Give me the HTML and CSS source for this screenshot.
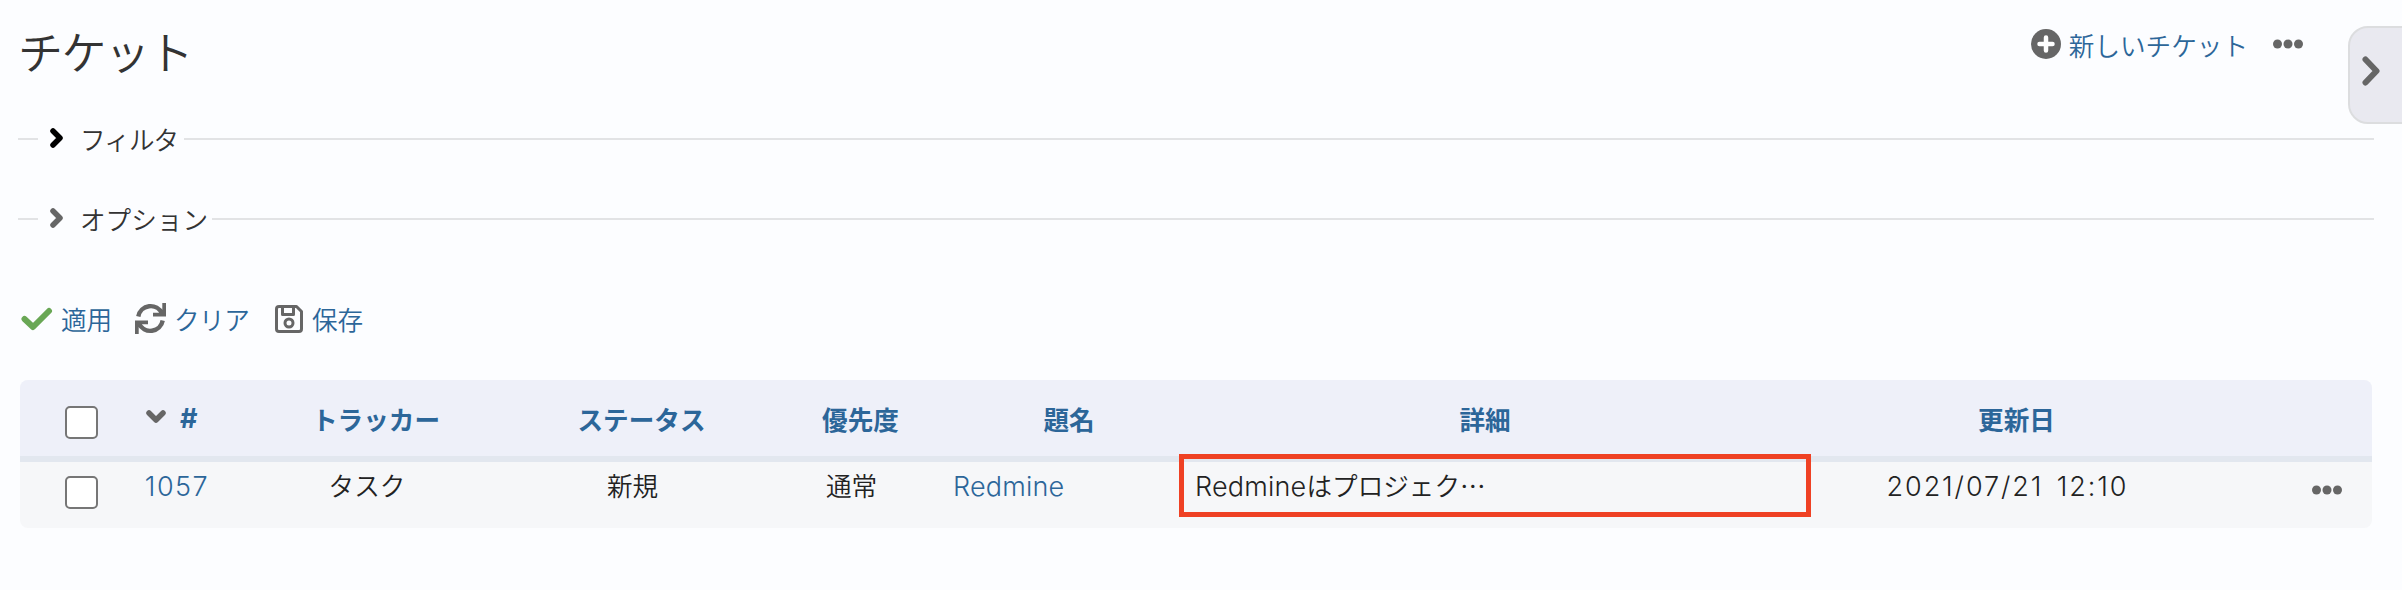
FILE: index.html
```html
<!DOCTYPE html>
<html lang="ja">
<head>
<meta charset="utf-8">
<title>チケット</title>
<link rel="stylesheet" href="styles.css">
</head>
<body>
<main class="content">
  <header class="top">
    <h1 class="title">チケット</h1>
    <div class="contextual">
      <svg class="icon-plus" viewBox="0 0 30 30"><circle cx="15" cy="15" r="15"/><path d="M15 8.500v13M8.500 15h13"/></svg>
      <a class="new-issue">新しいチケット</a>
      <svg class="icon-dots" viewBox="0 0 30 10"><circle cx="4.500" cy="5" r="4.500"/><circle cx="15" cy="5" r="4.500"/><circle cx="25.500" cy="5" r="4.500"/></svg>
    </div>
  </header>
  <div class="fieldset">
    <svg class="chev dark" viewBox="0 0 13 20"><path d="M3 3l7 7-7 7"/></svg>
    <span class="legend legend-filter">フィルタ</span>
  </div>
  <div class="fieldset">
    <svg class="chev" viewBox="0 0 13 20"><path d="M3 3l7 7-7 7"/></svg>
    <span class="legend legend-option">オプション</span>
  </div>
  <div class="buttons">
    <svg class="icon-check" viewBox="0 0 32 24"><path d="M3.500 12l8.500 8L28 4"/></svg>
    <a class="apply">適用</a>
    <svg class="icon-reload" viewBox="0 0 31 31"><path class="arc" d="M3.300 13.500A12.500 12.500 0 0 1 27 10.500M27.700 17.500A12.500 12.500 0 0 1 4 20.500"/><path class="head" d="M27.300 0H31V13.500H18V9.800h6.500l2.800-3zM3.700 31H0V17.500h13v3.700H6.500l-2.800 3z"/></svg>
    <a class="clear">クリア</a>
    <svg class="icon-save" viewBox="0 0 28 28"><path d="M4 1.500h17.500l5 5V24q0 2.500-2.500 2.500H4Q1.500 26.500 1.500 24V4Q1.500 1.500 4 1.500zM7.500 2v7.500h11V2"/><circle cx="14" cy="18" r="4"/></svg>
    <a class="save">保存</a>
  </div>
  <div class="issues">
    <div class="row head">
      <div class="cell check"><span class="checkbox"></span></div>
      <div class="cell id"><svg class="sort" viewBox="0 0 20 13"><path d="M3 3l7 7 7-7"/></svg><a class="hash">#</a></div>
      <div class="cell mid">トラッカー</div>
      <div class="cell mid">ステータス</div>
      <div class="cell mid">優先度</div>
      <div class="cell subject">題名</div>
      <div class="cell detail">詳細</div>
      <div class="cell mid">更新日</div>
      <div class="cell"></div>
    </div>
    <div class="row body">
      <div class="cell check"><span class="checkbox"></span></div>
      <div class="cell"><a class="number">1057</a></div>
      <div class="cell">タスク</div>
      <div class="cell">新規</div>
      <div class="cell">通常</div>
      <div class="cell subject"><a class="latin">Redmine</a></div>
      <div class="cell detail"><span class="latin">Redmine</span><span class="excerpt">はプロジェク…</span></div>
      <div class="cell"><span class="date">2021/07/21 12:10</span></div>
      <div class="cell more"><svg class="icon-dots" viewBox="0 0 30 10"><circle cx="4.500" cy="5" r="4.500"/><circle cx="15" cy="5" r="4.500"/><circle cx="25.500" cy="5" r="4.500"/></svg></div>
    </div>
    <div class="highlight"></div>
  </div>
</main>
<aside class="side-toggle"><svg viewBox="0 0 18 30"><path d="M3.500 3.500L14.500 15 3.500 26.500"/></svg></aside>
</body>
</html>
```
FILE: styles.css
```css
* { box-sizing: border-box; }
body {
  margin: 0;
  width: 2402px;
  height: 590px;
  overflow: hidden;
  background: #fcfdff;
  color: #222;
  font: 350 25.6px/36px "Noto Sans CJK JP", sans-serif;
}
svg { display: block; flex: none; fill: none; stroke-linecap: round; stroke-linejoin: round; }
a { color: #2c6699; white-space: nowrap; }
.content { padding: 0 30px 0 18px; }
.top { display: flex; justify-content: space-between; height: 119px; padding: 18px 69px 0 0; }
.title { margin: 0; font-size: 45px; line-height: 66px; font-weight: 350; color: #333; letter-spacing: -1.500px; }
.contextual { display: flex; height: 52px; align-items: center; }
.icon-plus { width: 30px; height: 30px; margin-right: 8px; fill: #666; }
.icon-plus path { stroke: #fff; stroke-width: 4.500px; }
.new-issue { margin: 1px 25px 0 0; }
.icon-dots { width: 30px; height: 10px; fill: #666; }
.fieldset { display: flex; align-items: center; height: 40px; margin-bottom: 40px; }
.fieldset::before, .fieldset::after { content: ""; height: 2px; background: #e2e3e5; }
.fieldset::before { width: 20px; }
.fieldset::after { flex: 1; margin-right: -2px; }
.chev { width: 13px; height: 20px; margin: 0 17px 2px 12px; stroke: #666; stroke-width: 5.500px; }
.chev.dark { stroke: #000; }
.legend { color: #333; white-space: nowrap; }
.legend-filter { width: 104px; letter-spacing: -0.900px; }
.legend-option { width: 132px; }
.buttons { display: flex; align-items: center; height: 40px; margin: 60px 0 41px 3px; }
.icon-check { width: 32px; height: 24px; margin-right: 8px; stroke: #69a755; stroke-width: 6px; }
.apply { width: 74px; }
.icon-reload { width: 31px; height: 31px; margin-top: -2px; margin-right: 8px; }
.icon-reload .arc { stroke: #666; stroke-width: 4.400px; stroke-linecap: butt; }
.icon-reload .head { fill: #666; }
.clear { width: 101px; letter-spacing: -0.500px; }
.icon-save { width: 28px; height: 28px; margin-right: 9px; stroke: #666; stroke-width: 3px; }
.issues { position: relative; width: 2352px; height: 148px; margin-left: 2px; border-radius: 8px; overflow: hidden; background: #f6f7f9; }
.row { display: grid; grid-template-columns: 114px 86px 294px 237px 201px 228px 630px 395px 167px; }
.cell { display: flex; justify-content: center; white-space: nowrap; }
.head { height: 82px; padding-top: 21px; background: #eef0f9; border-bottom: 6px solid #e2e7ef; color: #2c6699; font-weight: 700; }
.body { height: 66px; padding-top: 5px; }
.head .mid { padding-left: 18px; }
.head .subject { padding-left: 6px; }
.head .detail { padding-right: 20px; }
.checkbox { width: 33px; height: 33px; border: 2px solid #767676; border-radius: 5px; background: #fff; }
.check { justify-content: flex-start; padding-left: 45px; }
.head .check { padding-top: 5px; }
.body .check { padding-top: 9px; }
.sort { width: 20px; height: 13px; margin: 9px 14px 0 0; stroke: #666; stroke-width: 5.500px; }
.id { justify-content: flex-start; padding-left: 12px; }
.hash { font-family: Inter, sans-serif; font-size: 27px; }
.number, .date, .latin { padding-top: 2px; font-family: Inter, "Noto Sans CJK JP", sans-serif; font-size: 27px; font-weight: 350; }
.latin { letter-spacing: 0.200px; }
.number { letter-spacing: 1.500px; }
.date { letter-spacing: 1.900px; word-spacing: 4px; }
.body .subject { justify-content: flex-start; padding-left: 1px; }
.body .detail { justify-content: flex-start; padding-left: 15px; }
.more { align-items: flex-start; justify-content: flex-end; padding: 18px 30px 0 0; }
.highlight { position: absolute; left: 1159px; top: 74px; width: 632px; height: 63px; border: 5.500px solid #ef4124; }
.side-toggle { position: absolute; left: 2348px; top: 26px; width: 60px; height: 98px; padding: 28px 0 0 12px; border: 2px solid #dcdddf; border-radius: 20px 0 0 20px; background: #e9e9f0; }
.side-toggle svg { width: 18px; height: 30px; stroke: #666; stroke-width: 6px; }
```
